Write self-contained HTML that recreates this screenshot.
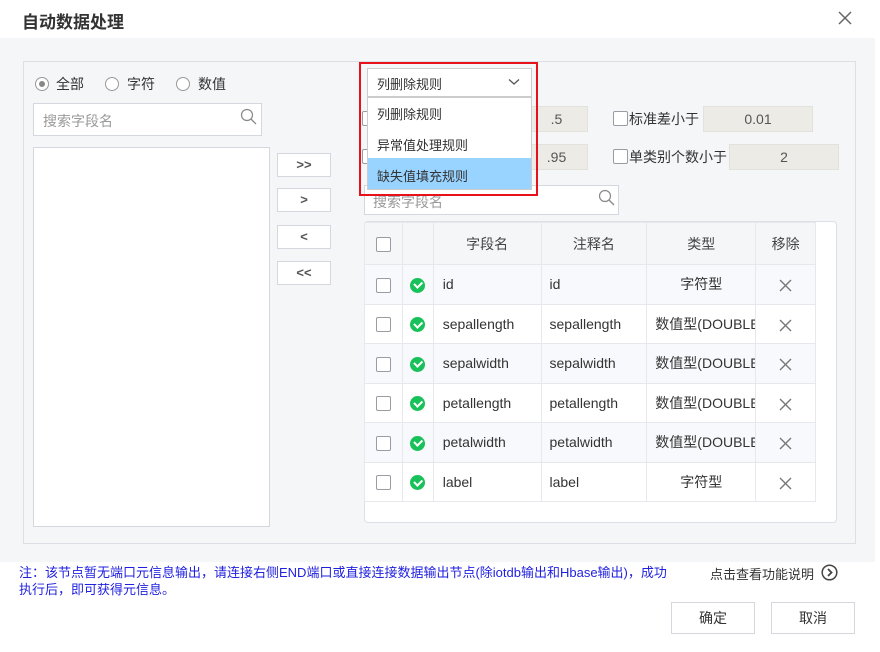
<!DOCTYPE html>
<html><head><meta charset="utf-8"><style>
*{box-sizing:border-box;margin:0;padding:0}
body{width:880px;height:652px;background:#fff;font-family:"Liberation Sans","Noto Sans CJK SC",sans-serif;color:#333;position:relative;overflow:hidden;font-size:14px}
.a{position:absolute}
.title{left:22px;top:8px;font-size:17px;color:#333;font-weight:bold}
.gray{left:0;top:38px;width:875px;height:524px;background:#f5f6f8}
.panel{left:23px;top:61px;width:833px;height:483px;border:1px solid #dcdfe6;background:#f5f6f8}
.radio{width:14px;height:14px;border:1px solid #999;border-radius:50%;background:#fff}
.inp{background:#fff;border:1px solid #d4d7de}
.btn{border:1px solid #d4d7de;background:#fff;text-align:center;font-size:13px;color:#555;line-height:21px;font-weight:bold}
.cb{width:15px;height:15px;border:1.5px solid #9a9ca4;border-radius:2px;background:#fff}
.ginp{background:#ecebe6;border:1px solid #e2e1dc;text-align:center;color:#555;line-height:24px}
table{border-collapse:collapse;font-size:14px}
td{border:1px solid #e6e8ec;height:39.5px;padding:0;color:#333}
tr:nth-child(even) td{background:#f8f9fc}
th{border:1px solid #e6e8ec;height:42px;font-weight:normal;background:#f5f6f8;color:#444}
.ok{display:inline-block;width:15px;height:15px;border-radius:50%;background:#19c15a;position:relative;vertical-align:middle}
.ok:after{content:"";position:absolute;left:4px;top:3.5px;width:6px;height:3.5px;border-left:2px solid #fff;border-bottom:2px solid #fff;transform:rotate(-45deg)}
.x{text-align:center}
.x svg{vertical-align:middle}
</style></head><body>
<div class="a title">自动数据处理</div>
<svg class="a" style="left:838px;top:11px" width="14" height="14"><path d="M1 1L13 13M13 1L1 13" stroke="#666" stroke-width="1.5"/></svg>
<div class="a gray"></div>
<div class="a panel"></div>

<div class="a radio" style="left:35px;top:77px"><div style="width:6px;height:6px;border-radius:50%;background:#888;margin:3px"></div></div>
<div class="a" style="left:56px;top:74px">全部</div>
<div class="a radio" style="left:105px;top:77px"></div>
<div class="a" style="left:127px;top:74px">字符</div>
<div class="a radio" style="left:176px;top:77px"></div>
<div class="a" style="left:198px;top:74px">数值</div>
<div class="a inp" style="left:33px;top:103px;width:229px;height:33px"></div>
<div class="a" style="left:43px;top:111px;color:#999">搜索字段名</div>
<svg class="a" style="left:240px;top:108px" width="18" height="18"><circle cx="7" cy="7" r="5.5" fill="none" stroke="#888" stroke-width="1.2"/><line x1="11" y1="11" x2="16" y2="16" stroke="#888" stroke-width="1.3"/></svg>
<div class="a inp" style="left:33px;top:147px;width:237px;height:380px"></div>
<div class="a btn" style="left:277px;top:153px;width:54px;height:24px">&gt;&gt;</div>
<div class="a btn" style="left:277px;top:188px;width:54px;height:24px">&gt;</div>
<div class="a btn" style="left:277px;top:225px;width:54px;height:24px">&lt;</div>
<div class="a btn" style="left:277px;top:261px;width:54px;height:24px">&lt;&lt;</div>

<div class="a cb" style="left:362px;top:111px"></div>
<div class="a ginp" style="left:525px;top:106px;width:63px;height:26px">.5</div>
<div class="a cb" style="left:362px;top:149px"></div>
<div class="a ginp" style="left:525px;top:144px;width:63px;height:26px">.95</div>
<div class="a cb" style="left:613px;top:111px"></div>
<div class="a" style="left:629px;top:109px">标准差小于</div>
<div class="a ginp" style="left:703px;top:106px;width:110px;height:26px">0.01</div>
<div class="a cb" style="left:613px;top:149px"></div>
<div class="a" style="left:629px;top:147px">单类别个数小于</div>
<div class="a ginp" style="left:729px;top:144px;width:110px;height:26px">2</div>
<div class="a inp" style="left:364px;top:185px;width:255px;height:30px"></div>
<div class="a" style="left:373px;top:192px;color:#999">搜索字段名</div>
<svg class="a" style="left:598px;top:189px" width="18" height="18"><circle cx="7" cy="7" r="5.5" fill="none" stroke="#888" stroke-width="1.2"/><line x1="11" y1="11" x2="16" y2="16" stroke="#888" stroke-width="1.3"/></svg>

<div class="a" style="left:364px;top:221px;width:473px;height:302px;background:#fff;border:1px solid #dcdfe6;border-radius:4px"></div>
<table class="a" style="left:364px;top:222px;width:452px">
<tr><th style="width:38px"><span class="cb" style="display:inline-block;vertical-align:middle"></span></th><th style="width:31px"></th><th style="width:108px">字段名</th><th style="width:106px">注释名</th><th style="width:109px">类型</th><th style="width:60px">移除</th></tr>
<tr><td align=center><span class="cb" style="display:inline-block;vertical-align:middle"></span></td><td align=center><span class="ok"></span></td><td style="padding-left:9px">id</td><td style="padding-left:8px">id</td><td align=center>字符型</td><td class="x"><svg width="13" height="13"><path d="M1 1L12 12M12 1L1 12" stroke="#777" stroke-width="1.4"/></svg></td></tr>
<tr><td align=center><span class="cb" style="display:inline-block;vertical-align:middle"></span></td><td align=center><span class="ok"></span></td><td style="padding-left:9px">sepallength</td><td style="padding-left:8px">sepallength</td><td style="padding-left:8px;white-space:nowrap;overflow:hidden;max-width:109px">数值型(DOUBLE)</td><td class="x"><svg width="13" height="13"><path d="M1 1L12 12M12 1L1 12" stroke="#777" stroke-width="1.4"/></svg></td></tr>
<tr><td align=center><span class="cb" style="display:inline-block;vertical-align:middle"></span></td><td align=center><span class="ok"></span></td><td style="padding-left:9px">sepalwidth</td><td style="padding-left:8px">sepalwidth</td><td style="padding-left:8px;white-space:nowrap;overflow:hidden;max-width:109px">数值型(DOUBLE)</td><td class="x"><svg width="13" height="13"><path d="M1 1L12 12M12 1L1 12" stroke="#777" stroke-width="1.4"/></svg></td></tr>
<tr><td align=center><span class="cb" style="display:inline-block;vertical-align:middle"></span></td><td align=center><span class="ok"></span></td><td style="padding-left:9px">petallength</td><td style="padding-left:8px">petallength</td><td style="padding-left:8px;white-space:nowrap;overflow:hidden;max-width:109px">数值型(DOUBLE)</td><td class="x"><svg width="13" height="13"><path d="M1 1L12 12M12 1L1 12" stroke="#777" stroke-width="1.4"/></svg></td></tr>
<tr><td align=center><span class="cb" style="display:inline-block;vertical-align:middle"></span></td><td align=center><span class="ok"></span></td><td style="padding-left:9px">petalwidth</td><td style="padding-left:8px">petalwidth</td><td style="padding-left:8px;white-space:nowrap;overflow:hidden;max-width:109px">数值型(DOUBLE)</td><td class="x"><svg width="13" height="13"><path d="M1 1L12 12M12 1L1 12" stroke="#777" stroke-width="1.4"/></svg></td></tr>
<tr><td align=center><span class="cb" style="display:inline-block;vertical-align:middle"></span></td><td align=center><span class="ok"></span></td><td style="padding-left:9px">label</td><td style="padding-left:8px">label</td><td align=center>字符型</td><td class="x"><svg width="13" height="13"><path d="M1 1L12 12M12 1L1 12" stroke="#777" stroke-width="1.4"/></svg></td></tr>
</table>

<div class="a" style="left:367px;top:68px;width:165px;height:29px;background:#fff;border:1px solid #ccc"></div>
<div class="a" style="left:377px;top:74px;font-size:13px">列删除规则</div>
<svg class="a" style="left:508px;top:78px" width="12" height="8"><path d="M1 1.5L6 6L11 1.5" fill="none" stroke="#555" stroke-width="1.3"/></svg>
<div class="a" style="left:367px;top:97px;width:165px;height:93px;background:#fff;border:1px solid #ccc"></div>
<div class="a" style="left:368px;top:158px;width:163px;height:31px;background:#99d3ff"></div>
<div class="a" style="left:377px;top:104px;font-size:13px">列删除规则</div>
<div class="a" style="left:377px;top:135px;font-size:13px">异常值处理规则</div>
<div class="a" style="left:377px;top:166px;font-size:13px">缺失值填充规则</div>
<div class="a" style="left:359px;top:62px;width:179px;height:134px;border:2px solid #e8101a"></div>

<div class="a" style="left:19px;top:564px;font-size:13px;color:#1f1fe0;line-height:17px;width:680px">注：该节点暂无端口元信息输出，请连接右侧END端口或直接连接数据输出节点(除iotdb输出和Hbase输出)，成功<br>执行后，即可获得元信息。</div>
<div class="a" style="left:710px;top:564px;font-size:13px;color:#333">点击查看功能说明</div>
<svg class="a" style="left:821px;top:564px" width="17" height="17"><circle cx="8.5" cy="8.5" r="7.3" fill="none" stroke="#444" stroke-width="1.5"/><path d="M7 5L10.5 8.5L7 12" fill="none" stroke="#444" stroke-width="1.8"/></svg>
<div class="a" style="left:671px;top:602px;width:84px;height:32px;border:1px solid #d4d7de;background:#fff;text-align:center;line-height:30px;font-size:14px">确定</div>
<div class="a" style="left:771px;top:602px;width:84px;height:32px;border:1px solid #d4d7de;background:#fff;text-align:center;line-height:30px;font-size:14px">取消</div>
</body></html>
